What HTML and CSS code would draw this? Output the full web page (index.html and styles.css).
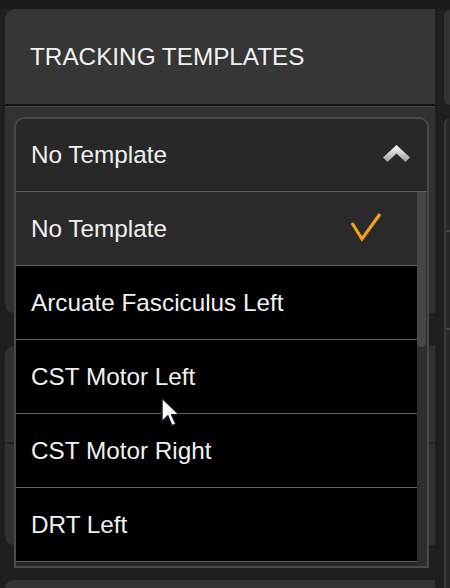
FILE: index.html
```html
<!DOCTYPE html>
<html lang="en">
<head>
  <meta charset="UTF-8">
  <title>Tracking Templates</title>
  <link rel="stylesheet" href="styles.css">
</head>
<body>

  <div class="stage">
    <div class="main-col">
      <div class="panel-head">TRACKING TEMPLATES</div>
      <div class="panel panel-a"></div>
      <div class="panel panel-b"><div class="panel-rule"></div></div>
      <div class="panel panel-c"></div>
    </div>
    <div class="side-col">
      <div class="side-panel side-top"></div>
      <div class="side-panel side-rest">
        <div class="side-rule"></div>
        <div class="side-rule"></div>
      </div>
    </div>

    <div class="dropdown">
      <div class="dropdown-head">
        <span>No Template</span>
        <svg class="chevron" width="27" height="17" viewBox="0 0 27 17">
          <defs>
            <linearGradient id="chev" x1="0" y1="0" x2="0" y2="1">
              <stop offset="0" stop-color="#ffffff"/>
              <stop offset="1" stop-color="#9a9a9a"/>
            </linearGradient>
          </defs>
          <polygon points="13.5,0 27,12.5 22.5,17 13.5,8.5 4.5,17 0,12.5" fill="url(#chev)"/>
        </svg>
      </div>
      <div class="dropdown-body">
        <ul class="options">
          <li class="option selected">
            <span>No Template</span>
            <svg class="check" width="34" height="32" viewBox="0 0 34 32">
              <polyline points="3,12 13,28 31,3" fill="none" stroke="#f5a11c" stroke-width="3.2" stroke-linejoin="miter"/>
            </svg>
          </li>
          <li class="option">Arcuate Fasciculus Left</li>
          <li class="option">CST Motor Left</li>
          <li class="option">CST Motor Right</li>
          <li class="option">DRT Left</li>
        </ul>
        <div class="scrollbar"><div class="thumb"></div></div>
      </div>
    </div>

    <svg class="cursor" width="20" height="31" viewBox="0 0 19 29">
      <path d="M1 1 L1 23 L6.5 17.5 L10.5 27 L14 25.5 L10 16.5 L17 16.5 Z" fill="#ffffff" stroke="#1a1a2a" stroke-width="1.3" stroke-linejoin="round"/>
    </svg>
  </div>

</body>
</html>
```

FILE: styles.css
```css
body {
  margin: 0;
  background: #1f1f1f;
  font-family: "Liberation Sans", Arial, sans-serif;
  overflow: hidden;
}

.stage {
  position: relative;
  display: flex;
  width: 450px;
  height: 588px;
  background: #1f1f1f;
  border-top: 9px solid #1a1a1a;
  box-sizing: border-box;
}

.main-col {
  width: 430px;
  margin-left: 5px;
  display: flex;
  flex-direction: column;
}

.panel-head {
  height: 95px;
  flex: none;
  display: flex;
  align-items: center;
  padding-left: 25px;
  background: #363636;
  border-radius: 10px 0 0 0;
  border-bottom: 2px solid #121212;
  color: #f2f2f2;
  font-size: 24.3px;
}

.panel {
  background: #323232;
  flex: none;
}

.panel-a {
  height: 206px;
  border-top: 1px solid #474747;
  border-radius: 0 0 0 9px;
}

.panel-b {
  margin-top: 33px;
  height: 199px;
  border-radius: 9px 0 0 9px;
  position: relative;
}

.panel-rule {
  position: absolute;
  left: 0;
  right: 0;
  top: 96px;
  height: 2px;
  background: #222;
}

.panel-c {
  margin-top: 35px;
  flex: 1;
  border-radius: 9px 0 0 0;
}

.side-col {
  margin-left: 9px;
  flex: 1;
  display: flex;
  flex-direction: column;
}

.side-panel {
  background: #333;
  border-radius: 8px 0 0 8px;
}

.side-top {
  margin-top: 1px;
  height: 95px;
}

.side-rest {
  margin-top: 13px;
  flex: 1;
  background: #272727;
  border-left: 2px solid #3a3a3a;
  border-radius: 8px 0 0 0;
  display: flex;
  flex-direction: column;
  gap: 96px;
  padding-top: 112px;
}

.side-rule {
  height: 2px;
  background: #454545;
}

/* dropdown menu lies over the panels */
.dropdown {
  position: absolute;
  left: 14px;
  top: 108px;
  width: 415px;
  box-sizing: border-box;
  border: 2px solid #4a4a4a;
  border-radius: 10px 10px 0 0;
  background: #282828;
  color: #f0f0f0;
  font-size: 24.3px;
}

.dropdown-head {
  height: 72px;
  display: flex;
  align-items: center;
  justify-content: space-between;
  padding: 0 17px 0 15px;
  border-bottom: 1px solid #5a5a5a;
}

.chevron {
  margin-top: -3px;
}

.dropdown-body {
  display: flex;
  height: 374px;
  background: #262626;
}

.options {
  list-style: none;
  margin: 0;
  padding: 0;
  flex: 1;
}

.option {
  height: 73px;
  display: flex;
  align-items: center;
  justify-content: space-between;
  padding: 0 34px 0 15px;
  background: #000;
  border-bottom: 1px solid #626262;
}

.option.selected {
  background: #2a2a2a;
}

.check {
  margin-top: -3px;
}

.scrollbar {
  width: 10px;
  background: #2e2e2e;
}

.thumb {
  height: 155px;
  margin-right: 1px;
  background: #474747;
  border-radius: 0 0 5px 5px;
}

.cursor {
  position: absolute;
  left: 161px;
  top: 388px;
}
```
